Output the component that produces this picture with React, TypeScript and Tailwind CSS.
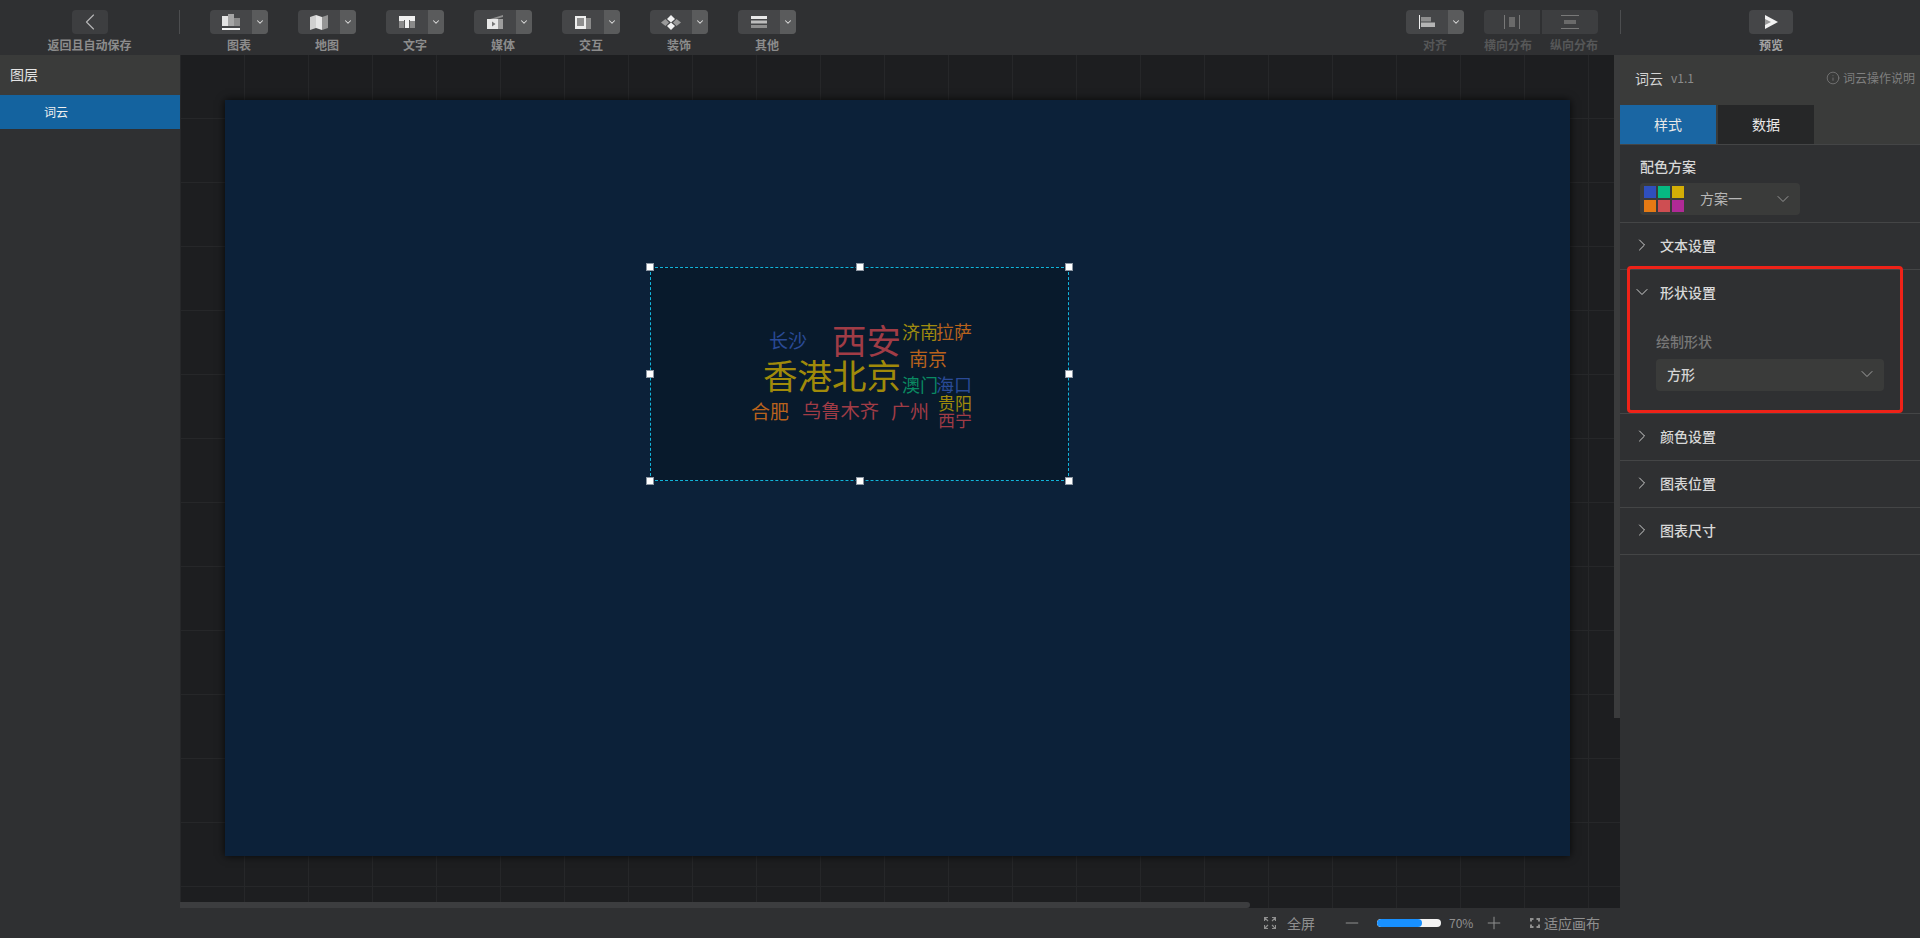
import { ChevronDown, ChevronLeft, ChevronRight, Info, Minus, Plus } from 'lucide-react';
import type { ReactNode } from 'react';

const tools: { label: string; icon: ReactNode }[] = [
  {
    label: '图表',
    icon: (
      <svg width="18" height="16" viewBox="0 0 18 16">
        <rect x="0" y="2" width="6" height="10" fill="#e4e4e4" />
        <rect x="6" y="0" width="6" height="12" fill="#a5a5a5" />
        <rect x="12" y="4" width="6" height="8" fill="#8a8a8a" />
        <rect x="0" y="14" width="18" height="2" fill="#f5f5f5" />
      </svg>
    ),
  },
  {
    label: '地图',
    icon: (
      <svg width="18" height="15" viewBox="0 0 18 15">
        <path d="M0 2 L6 0 V13 L0 15 Z" fill="#cfcfcf" />
        <path d="M6 0 L12 2 V15 L6 13 Z" fill="#e6e6e6" />
        <path d="M12 2 L18 0 V13 L12 15 Z" fill="#959595" />
      </svg>
    ),
  },
  {
    label: '文字',
    icon: (
      <svg width="16" height="12" viewBox="0 0 16 12">
        <rect width="16" height="12" fill="#f0f0f0" />
        <rect x="0" y="5" width="5" height="7" fill="#8a8a8a" />
        <rect x="11" y="5" width="5" height="7" fill="#8a8a8a" />
        <rect x="5" y="4" width="1" height="8" fill="#5a5a5a" />
        <rect x="10" y="4" width="1" height="8" fill="#5a5a5a" />
      </svg>
    ),
  },
  {
    label: '媒体',
    icon: (
      <svg width="16" height="14" viewBox="0 0 16 14">
        <path d="M3 4 L16 0 V2 L9 4 Z" fill="#8f8f8f" />
        <rect x="0" y="4" width="16" height="10" fill="#e8e8e8" />
        <rect x="11" y="4" width="5" height="10" fill="#9d9d9d" />
        <path d="M5 6.5 L8.5 9 L5 11.5 Z" fill="#777" />
      </svg>
    ),
  },
  {
    label: '交互',
    icon: (
      <svg width="16" height="13" viewBox="0 0 16 13">
        <rect x="11" y="2" width="5" height="11" fill="#8a8a8a" />
        <rect x="0" y="0" width="11" height="13" fill="#eeeeee" />
        <rect x="2" y="2" width="7" height="8" fill="#8f8f8f" />
      </svg>
    ),
  },
  {
    label: '装饰',
    icon: (
      <svg width="20" height="15" viewBox="0 0 20 15">
        <path d="M10 0 L14 4 L10 7.5 L6 4 Z" fill="#f2f2f2" />
        <path d="M10 7.5 L14 11 L10 15 L6 11 Z" fill="#f2f2f2" />
        <path d="M4.5 4 L8 7.5 L4.5 11 L0 7.5 Z" fill="#9a9a9a" />
        <path d="M15.5 4 L20 7.5 L15.5 11 L12 7.5 Z" fill="#9a9a9a" />
      </svg>
    ),
  },
  {
    label: '其他',
    icon: (
      <svg width="16" height="12" viewBox="0 0 16 12">
        <rect width="16" height="3" fill="#e8e8e8" />
        <rect y="4.5" width="16" height="3" fill="#bdbdbd" />
        <rect y="9" width="16" height="3" fill="#8f8f8f" />
      </svg>
    ),
  },
];

const words = [
  { text: '西安', cls: 'left-[652px] top-[267px] text-[34.5px] text-[#a03c46]' },
  { text: '长沙', cls: 'left-[589px] top-[275px] text-[19px] text-[#2a4a96]' },
  { text: '济南', cls: 'left-[722px] top-[267px] text-[18px] text-[#a08c0f]' },
  { text: '拉萨', cls: 'left-[756px] top-[267px] text-[18px] text-[#b8621c]' },
  { text: '南京', cls: 'left-[729px] top-[293px] text-[19px] text-[#b8621c]' },
  { text: '香港北京', cls: 'left-[583px] top-[302px] text-[34.5px] text-[#a08a0a]' },
  { text: '澳门', cls: 'left-[722px] top-[320px] text-[18px] text-[#0a8a62]' },
  { text: '海口', cls: 'left-[756px] top-[320px] text-[18px] text-[#2a4a96]' },
  { text: '贵阳', cls: 'left-[758px] top-[339px] text-[17px] text-[#a08a0a]' },
  { text: '西宁', cls: 'left-[758px] top-[356px] text-[17px] text-[#a03c46]' },
  { text: '合肥', cls: 'left-[571px] top-[346px] text-[19px] text-[#b8621c]' },
  { text: '乌鲁木齐', cls: 'left-[622px] top-[346px] text-[19.3px] text-[#a03c46]' },
  { text: '广州', cls: 'left-[711px] top-[346px] text-[19px] text-[#a03c46]' },
];

const handles = [
  'left-[-5px] top-[-5px]',
  'left-[205px] top-[-5px]',
  'right-[-5px] top-[-5px]',
  'left-[-5px] top-[102px]',
  'right-[-5px] top-[102px]',
  'left-[-5px] bottom-[-5px]',
  'left-[205px] bottom-[-5px]',
  'right-[-5px] bottom-[-5px]',
];

function ToolButton({ label, icon }: { label: string; icon: ReactNode }) {
  return (
    <div className="flex w-[58px] flex-col items-center">
      <div className="flex h-6 w-full overflow-hidden rounded bg-[#454648]">
        <div className="flex w-[42px] items-center justify-center">{icon}</div>
        <div className="flex w-4 items-center justify-center bg-[#5a5b5c]">
          <ChevronDown size={10} strokeWidth={2.5} className="text-[#e0e0e0]" />
        </div>
      </div>
      <span className="mt-[2px] text-xs leading-[18px] font-bold text-[#8c8c8c]">{label}</span>
    </div>
  );
}

function Section({ title }: { title: string }) {
  return (
    <div className="flex h-[47px] items-center border-b border-[#444546] pb-[2px] pl-3">
      <ChevronRight size={20} strokeWidth={1.2} className="text-[#cfcfcf]" />
      <span className="ml-2 text-sm font-medium text-[#d8d8d8]">{title}</span>
    </div>
  );
}

export default function App() {
  return (
    <div className="flex h-[938px] w-[1920px] flex-col overflow-hidden bg-[#2f3032] font-['Noto_Sans_CJK_SC','Noto_Sans',sans-serif]">
      {/* 顶部工具栏 */}
      <header className="flex h-[55px] shrink-0 pt-[10px]">
        <div className="flex w-[179px] flex-col items-center">
          <div className="flex h-6 w-9 items-center justify-center rounded bg-[#3d3e40]">
            <ChevronLeft size={28} strokeWidth={1} className="text-[#b5b5b5]" />
          </div>
          <span className="mt-[2px] text-xs leading-[18px] font-bold text-[#8c8c8c]">返回且自动保存</span>
        </div>
        <div className="h-6 w-px bg-[#4c4d4f]" />
        <div className="ml-[30px] flex gap-[30px]">
          {tools.map((t) => (
            <ToolButton key={t.label} label={t.label} icon={t.icon} />
          ))}
        </div>
        <div className="ml-[610px] flex w-[58px] flex-col items-center">
          <div className="flex h-6 w-full overflow-hidden rounded bg-[#454648]">
            <div className="flex w-[42px] items-center justify-center">
              <svg width="16" height="14" viewBox="0 0 16 14">
                <rect x="0" y="0" width="1" height="14" fill="#f0f0f0" />
                <rect x="2" y="2" width="10" height="4.5" fill="#8e8e8e" />
                <rect x="2" y="7.5" width="14" height="4.5" fill="#b5b5b5" />
              </svg>
            </div>
            <div className="flex w-4 items-center justify-center bg-[#5a5b5c]">
              <ChevronDown size={10} strokeWidth={2.5} className="text-[#e0e0e0]" />
            </div>
          </div>
          <span className="mt-[2px] text-xs leading-[18px] font-bold text-[#565758]">对齐</span>
        </div>
        <div className="ml-5 flex flex-col">
          <div className="flex h-6 w-[114px] gap-[2px] overflow-hidden rounded">
            <div className="flex flex-1 items-center justify-center bg-[#3d3e40]">
              <svg width="16" height="14" viewBox="0 0 16 14">
                <rect x="0" y="0" width="1" height="14" fill="#787878" />
                <rect x="15" y="0" width="1" height="14" fill="#787878" />
                <rect x="5" y="2" width="6" height="10" fill="#6a6a6a" />
              </svg>
            </div>
            <div className="flex flex-1 items-center justify-center bg-[#3d3e40]">
              <svg width="18" height="14" viewBox="0 0 18 14">
                <rect x="0" y="0" width="18" height="1" fill="#787878" />
                <rect x="0" y="13" width="18" height="1" fill="#787878" />
                <rect x="3" y="5" width="12" height="4" fill="#6a6a6a" />
              </svg>
            </div>
          </div>
          <div className="mt-[2px] flex w-[114px] justify-between text-xs leading-[18px] font-bold text-[#565758]">
            <span>横向分布</span>
            <span>纵向分布</span>
          </div>
        </div>
        <div className="ml-[22px] h-6 w-px bg-[#4c4d4f]" />
        <div className="ml-[128px] flex w-11 flex-col items-center">
          <div className="flex h-6 w-full items-center justify-center rounded bg-[#454648]">
            <svg width="14" height="14" viewBox="0 0 14 14">
              <path d="M1 0 L14 7 L1 14 Z" fill="#f2f2f2" />
              <path d="M1 4 L7 7 L1 10 Z" fill="#9a9a9a" />
            </svg>
          </div>
          <span className="mt-[2px] text-xs leading-[18px] font-bold text-[#a3a3a3]">预览</span>
        </div>
      </header>

      <div className="flex min-h-0 flex-1">
        {/* 图层 */}
        <aside className="w-[180px] shrink-0 bg-[#2f3032]">
          <div className="flex h-10 items-center bg-[#3a3b3a] pb-[2px] pl-[10px] text-sm text-[#e4e4e4]">图层</div>
          <div className="flex h-[34px] items-center bg-[#14639f] pl-11 text-xs text-[#f0f0f0]">词云</div>
        </aside>

        {/* 画布 */}
        <main className="flex min-w-0 flex-1 flex-col">
          <div className="relative min-h-0 flex-1 bg-[#1d1e20] bg-[linear-gradient(#262729_1px,transparent_1px),linear-gradient(90deg,#262729_1px,transparent_1px)] bg-[size:64px_64px] bg-[position:0_-1px]">
            <div className="absolute top-[45px] left-[45px] h-[756px] w-[1345px] bg-[#0c2139] shadow-[0_0_8px_rgba(0,0,0,0.8)]" />
            <div className="absolute top-[212px] left-[470px] h-[214px] w-[419px] border border-dashed border-[#12b5dc] bg-[#081a2c]">
              {handles.map((h) => (
                <span key={h} className={`absolute h-2 w-2 border border-[#8d97a3] bg-white ${h}`} />
              ))}
            </div>
            {words.map((w) => (
              <span key={w.text} className={`absolute leading-none whitespace-nowrap ${w.cls}`}>
                {w.text}
              </span>
            ))}
            <div className="absolute bottom-0 left-0 h-[6px] w-[1070px] rounded-r-full bg-[#3c3d3f]" />
            <div className="absolute top-0 right-0 h-[663px] w-[6px] bg-[#3a3b3c]" />
          </div>
          <div className="flex h-[30px] shrink-0 items-center bg-[#2f3032] text-sm text-[#8f8f8f]">
            <svg width="12" height="12" viewBox="0 0 12 12" className="ml-[1084px]" stroke="#8f8f8f" fill="none" strokeWidth="1.2">
              <path d="M0.5 4 V0.5 H4 M11.5 4 V0.5 H8 M0.5 8 V11.5 H4 M11.5 8 V11.5 H8 M1 1 L4 4 M11 1 L8 4 M1 11 L4 8 M11 11 L8 8" />
            </svg>
            <span className="ml-[11px] leading-none">全屏</span>
            <Minus size={20} strokeWidth={1.2} className="ml-[27px]" />
            <div className="ml-[15px] h-2 w-16 overflow-hidden rounded-full bg-[#f3f3f3]">
              <div className="h-full w-[45px] rounded-full bg-[#1890ff]" />
            </div>
            <span className="ml-2 w-[22px] text-xs leading-none whitespace-nowrap">70%</span>
            <Plus size={20} strokeWidth={1.2} className="ml-[13px]" />
            <svg width="10" height="10" viewBox="0 0 10 10" className="ml-[26px]" stroke="#8f8f8f" fill="none" strokeWidth="2">
              <path d="M1 3.5 V1 H3.5 M9 3.5 V1 H6.5 M1 6.5 V9 H3.5 M9 6.5 V9 H6.5" />
            </svg>
            <span className="ml-1 leading-none">适应画布</span>
          </div>
        </main>

        {/* 属性面板 */}
        <aside className="w-[300px] shrink-0 bg-[#2f3032]">
          <div className="bg-[#3a3b3a]">
            <div className="flex h-[50px] items-center justify-between pr-[5px] pb-[5px] pl-[15px]">
              <div className="flex items-center">
                <span className="text-sm text-[#d4d4d4]">词云</span>
                <span className="ml-2 text-xs text-[#8c8c8c]">v1.1</span>
              </div>
              <div className="flex items-center text-xs text-[#7f7f7f]">
                <Info size={14} strokeWidth={1.3} className="mr-[3px]" />
                词云操作说明
              </div>
            </div>
            <div className="flex h-[39px] gap-[2px]">
              <div className="flex w-24 items-center justify-center bg-[#1a66a3] pb-[2px] text-sm text-[#e8e8e8]">样式</div>
              <div className="flex w-24 items-center justify-center bg-[#262728] pb-[2px] text-sm text-[#e8e8e8]">数据</div>
            </div>
          </div>
          <div className="h-[79px] border-t border-b border-[#444546] px-5 pt-3">
            <div className="text-sm leading-[18px] font-medium text-[#d8d8d8]">配色方案</div>
            <div className="mt-[8px] flex h-8 w-40 items-center rounded-sm bg-[#3a3b3a] pr-[7px] pl-1">
              <div className="grid grid-cols-3 gap-[2px]">
                <span className="h-3 w-3 bg-[#2f4fbd]" />
                <span className="h-3 w-3 bg-[#06b982]" />
                <span className="h-3 w-3 bg-[#d4ae06]" />
                <span className="h-3 w-3 bg-[#e57a14]" />
                <span className="h-3 w-3 bg-[#ce4e52]" />
                <span className="h-3 w-3 bg-[#b02a96]" />
              </div>
              <span className="ml-4 pb-[2px] text-sm text-[#b8b8b8]">方案一</span>
              <ChevronDown size={20} strokeWidth={1} className="ml-auto text-[#a8a8a8]" />
            </div>
          </div>
          <Section title="文本设置" />
          <div className="relative h-[144px] border-b border-[#444546]">
            <div className="flex h-[44px] items-center pl-3">
              <ChevronDown size={20} strokeWidth={1.2} className="text-[#cfcfcf]" />
              <span className="ml-2 text-sm font-medium text-[#d8d8d8]">形状设置</span>
            </div>
            <div className="pt-[18px] pl-9 text-sm leading-[18px] font-medium text-[#777]">绘制形状</div>
            <div className="mt-[9px] ml-9 flex h-8 w-[228px] items-center justify-between rounded-sm bg-[#3a3b3a] pr-[7px] pb-[2px] pl-[11px] text-sm font-medium text-[#d4d4d4]">
              方形
              <ChevronDown size={20} strokeWidth={1} className="text-[#b5b5b5]" />
            </div>
            <div className="absolute top-[-4px] left-[7px] h-[147px] w-[276px] rounded-sm border-[3px] border-[#ee2218]" />
          </div>
          <Section title="颜色设置" />
          <Section title="图表位置" />
          <Section title="图表尺寸" />
        </aside>
      </div>
    </div>
  );
}
